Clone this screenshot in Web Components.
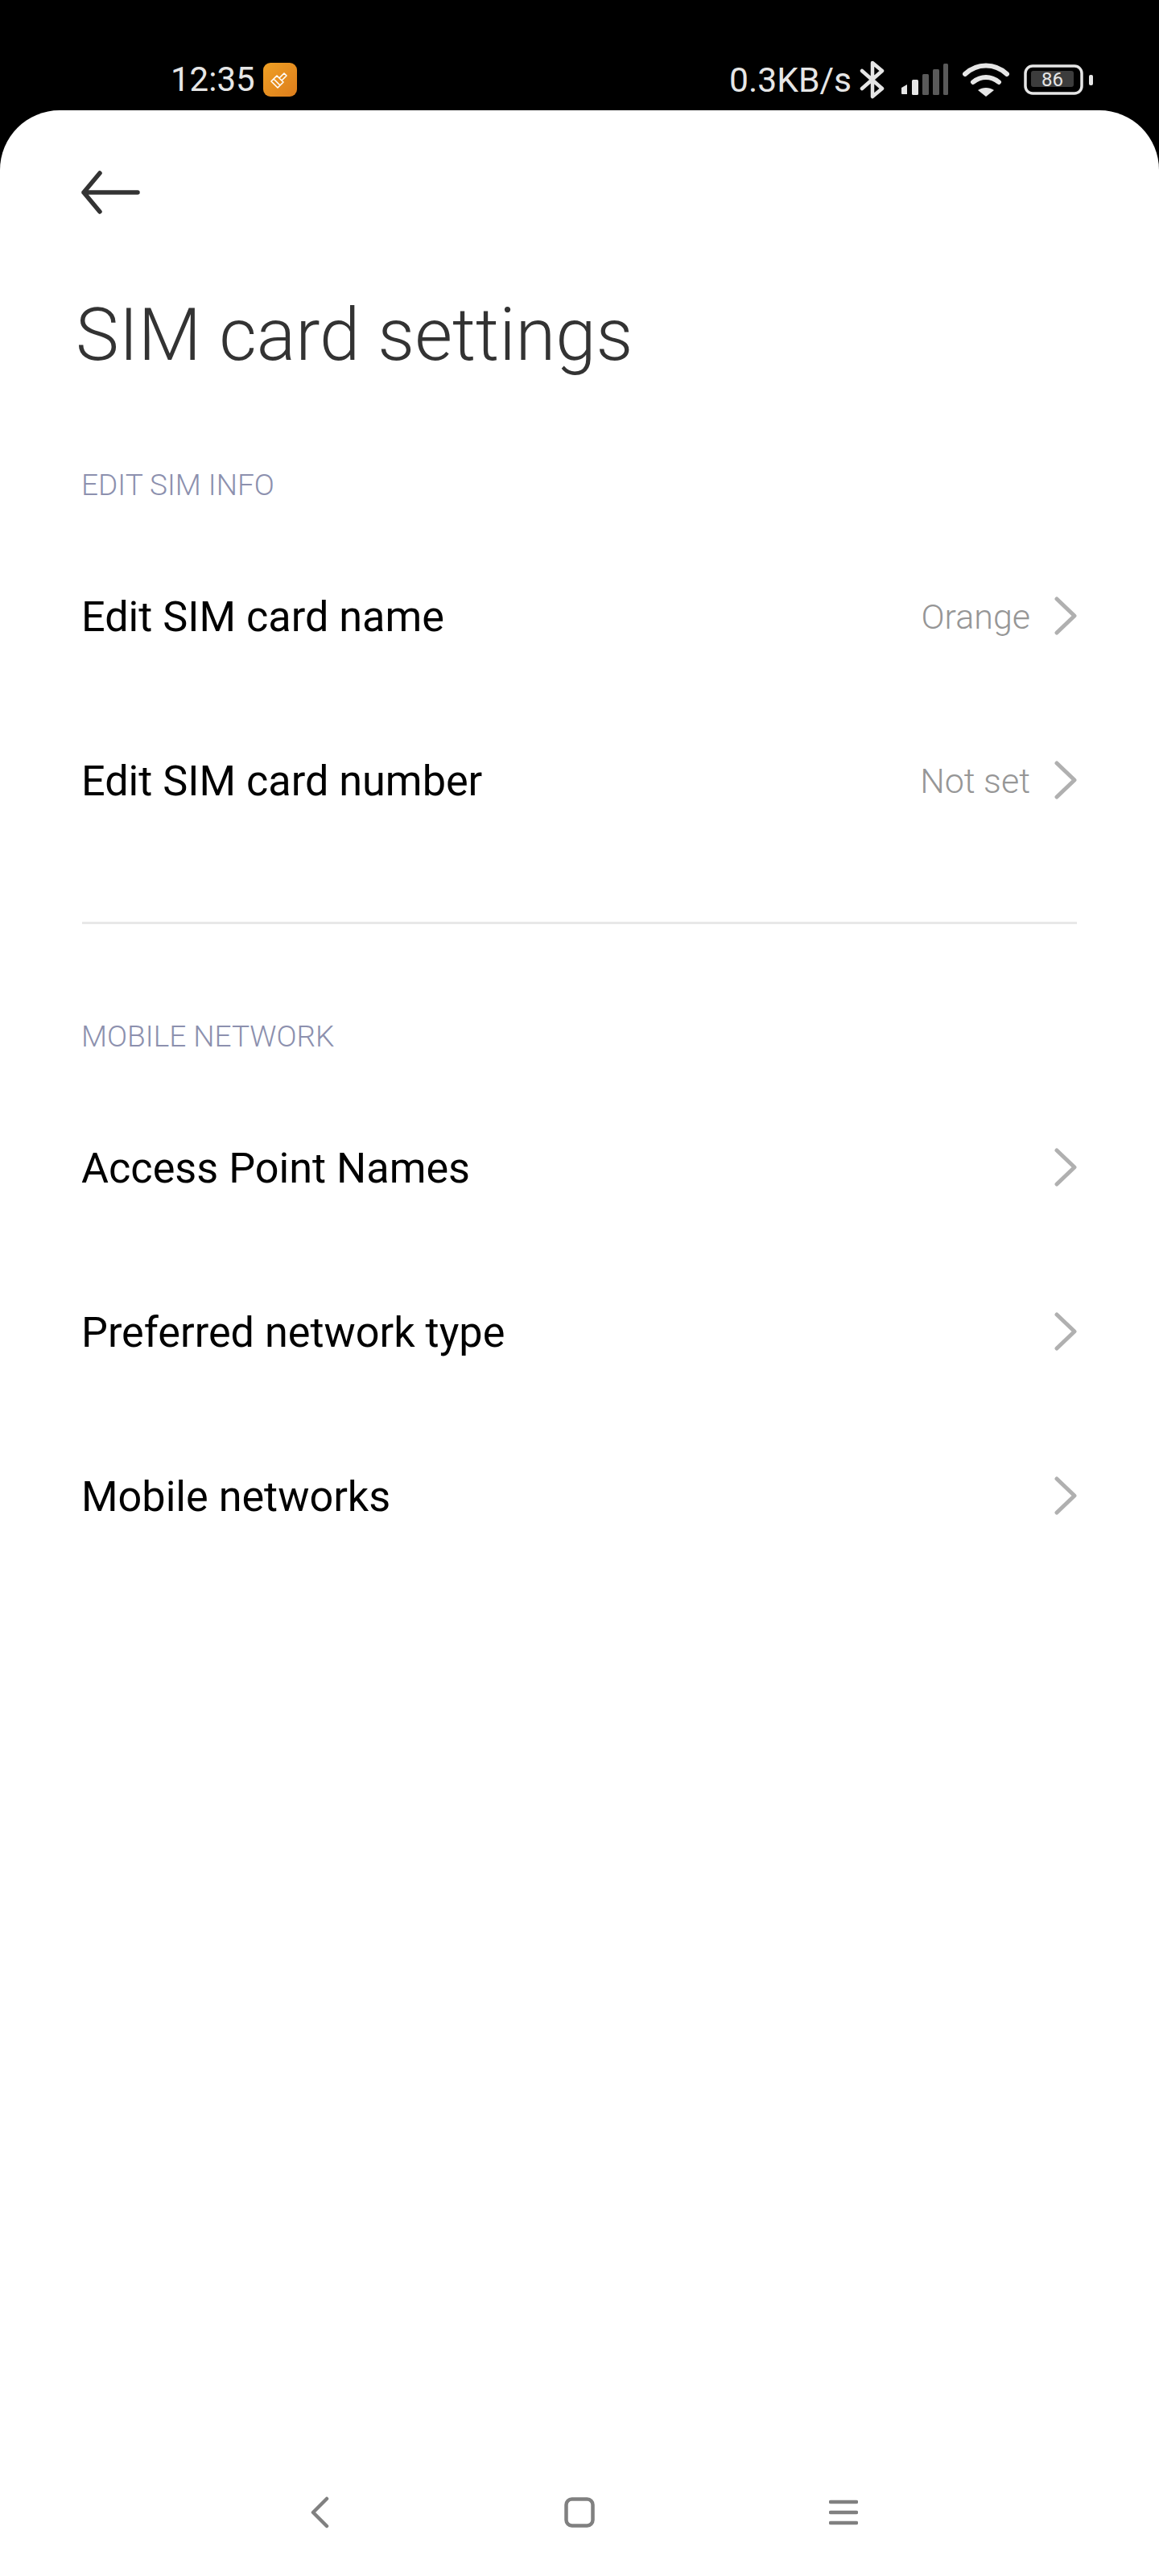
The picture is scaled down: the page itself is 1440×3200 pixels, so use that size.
<!DOCTYPE html>
<html>
<head>
<meta charset="utf-8">
<title>SIM card settings</title>
<style>
    html, body { margin: 0; padding: 0; background: #000; }
    body { font-family: Roboto, "Liberation Sans", sans-serif; }
</style>
</head>
<body>
<sim-screen>
    <status-bar></status-bar>
    <settings-page heading="SIM card settings">
        <section-label>EDIT SIM INFO</section-label>
        <setting-row value="Orange">Edit SIM card name</setting-row>
        <setting-row value="Not set">Edit SIM card number</setting-row>
        <list-divider></list-divider>
        <section-label>MOBILE NETWORK</section-label>
        <setting-row>Access Point Names</setting-row>
        <setting-row>Preferred network type</setting-row>
        <setting-row>Mobile networks</setting-row>
    </settings-page>
    <nav-keys></nav-keys>
</sim-screen>

<script>
class SimScreen extends HTMLElement {
    connectedCallback() {
        this.attachShadow({ mode: 'open' });
        this.shadowRoot.innerHTML = `
            <style>
                :host {
                    display: flex;
                    flex-direction: column;
                    width: 1440px;
                    height: 3200px;
                    background: #000;
                    overflow: hidden;
                }
                .sheet {
                    flex: 1;
                    display: flex;
                    flex-direction: column;
                    background: #fff;
                    border-radius: 74px 74px 0 0;
                }
            </style>
            <slot name="top"></slot>
            <div class="sheet"><slot></slot></div>
        `;
        this.querySelector('status-bar').slot = 'top';
    }
}

class StatusBar extends HTMLElement {
    connectedCallback() {
        this.attachShadow({ mode: 'open' });
        this.shadowRoot.innerHTML = `
            <style>
                :host {
                    display: flex;
                    align-items: center;
                    height: 137px;
                    box-sizing: border-box;
                    padding: 60px 0 0 212px;
                    color: #e6e6e6;
                    font-size: 42px;
                    line-height: 50px;
                }
                .time { margin-right: 10px; }
                .spacer { flex: 1; }
                .speed { font-size: 42.6px; }
                svg { display: block; flex: none; }
                .bt { margin-left: 10px; }
                .signal { margin-left: 18px; }
                .wifi { margin-left: 18px; }
                .battery-box {
                    position: relative;
                    margin: 0 80px 0 18px;
                    width: 88px;
                    height: 38px;
                }
                .battery-box svg { position: absolute; inset: 0; }
                .level {
                    position: absolute;
                    left: 9px;
                    top: 8px;
                    width: 53px;
                    height: 20px;
                    background: #3c3c3c;
                    border-radius: 3px;
                    text-align: center;
                    font-size: 24px;
                    line-height: 22px;
                    color: #e6e6e6;
                }
            </style>
            <span class="time">12:35</span>
            <svg width="42" height="42" viewBox="0 0 42 42">
                <defs>
                    <linearGradient id="g" x1="0" y1="0" x2="1" y2="1">
                        <stop offset="0" stop-color="#f0a024"/>
                        <stop offset="1" stop-color="#dc7d1c"/>
                    </linearGradient>
                </defs>
                <rect width="42" height="42" rx="9" fill="url(#g)"/>
                <path d="M10 23l7-7 8 8-7 7zM13 20l8 8M20 19l6-6 3 3-6 6" fill="none" stroke="#fff" stroke-width="1.600" stroke-linejoin="round"/>
            </svg>
            <span class="spacer"></span>
            <span class="speed">0.3KB/s</span>
            <svg class="bt" width="32" height="48" viewBox="0 0 32 48">
                <path d="M3 13l25 22-12 10V3l12 10L3 35" fill="none" stroke="#e6e6e6" stroke-width="4.500" stroke-linejoin="round" stroke-linecap="round"/>
            </svg>
            <svg class="signal" width="60" height="40" viewBox="0 0 60 40">
                <path d="M2 30l7-4v12H3a1 1 0 0 1-1-1z" fill="#e6e6e6"/>
                <rect x="15" y="20" width="8" height="19" rx="1.500" fill="#e6e6e6"/>
                <rect x="28" y="13" width="8" height="26" rx="1.500" fill="#5a5a5a"/>
                <rect x="41" y="7" width="8" height="32" rx="1.500" fill="#5a5a5a"/>
                <rect x="54" y="0" width="6" height="39" rx="1.500" fill="#5a5a5a"/>
            </svg>
            <svg class="wifi" width="58" height="44" viewBox="0 0 58 44">
                <path d="M3 15C18 1 40 1 55 15" fill="none" stroke="#e6e6e6" stroke-width="6" stroke-linecap="round"/>
                <path d="M13 25c10-8 22-8 32 0" fill="none" stroke="#e6e6e6" stroke-width="6" stroke-linecap="round"/>
                <path d="M29 43l-10-8c6-4 14-4 20 0z" fill="#e6e6e6"/>
            </svg>
            <div class="battery-box">
                <svg width="88" height="38" viewBox="0 0 88 38">
                    <rect x="2" y="2" width="70" height="34" rx="9" fill="none" stroke="#e6e6e6" stroke-width="3.500"/>
                    <rect x="81" y="13" width="5" height="13" rx="2" fill="#e6e6e6"/>
                </svg>
                <div class="level">86</div>
            </div>
        `;
    }
}

class SettingsPage extends HTMLElement {
    connectedCallback() {
        this.attachShadow({ mode: 'open' });
        this.shadowRoot.innerHTML = `
            <style>
                :host { display: block; flex: 1; }
                .back { display: block; margin: 72px 0 0 100px; }
                h1 {
                    margin: 87px 0 0 94px;
                    font-size: 90.5px;
                    line-height: 120px;
                    font-weight: 300;
                    color: #333;
                }
                .list { margin-top: 105px; }
            </style>
            <svg class="back" width="76" height="60" viewBox="0 0 76 60">
                <path d="M4 30H71M24 6L4 30l20 24" fill="none" stroke="#333" stroke-width="5.500" stroke-linecap="round" stroke-linejoin="round"/>
            </svg>
            <h1></h1>
            <div class="list"><slot></slot></div>
        `;
        this.shadowRoot.querySelector('h1').textContent = this.getAttribute('heading');
    }
}

class SectionLabel extends HTMLElement {
    connectedCallback() {
        this.attachShadow({ mode: 'open' });
        this.shadowRoot.innerHTML = `
            <style>
                :host {
                    display: block;
                    padding: 0 102px 39px 101px;
                    font-size: 37px;
                    line-height: 44px;
                    font-weight: 300;
                    color: #8c90ae;
                }
            </style>
            <slot></slot>
        `;
    }
}

class SettingRow extends HTMLElement {
    connectedCallback() {
        this.attachShadow({ mode: 'open' });
        this.shadowRoot.innerHTML = `
            <style>
                :host {
                    display: flex;
                    align-items: center;
                    height: 204px;
                    padding: 0 102px 0 101px;
                    font-size: 52.2px;
                    color: #000;
                }
                .label { flex: 1; }
                .value { font-size: 43px; font-weight: 300; color: #969696; margin-right: 30px; }
                svg { display: block; flex: none; margin-top: -2px; }
            </style>
            <span class="label"><slot></slot></span>
            <span class="value"></span>
            <svg width="28" height="48" viewBox="0 0 28 48">
                <path d="M3 3l22 21L3 45" fill="none" stroke="#b0b0b0" stroke-width="5" stroke-linecap="round" stroke-linejoin="round"/>
            </svg>
        `;
        this.shadowRoot.querySelector('.value').textContent = this.getAttribute('value') || '';
    }
}

class ListDivider extends HTMLElement {
    connectedCallback() {
        this.attachShadow({ mode: 'open' });
        this.shadowRoot.innerHTML = `
            <style>
                :host {
                    display: block;
                    height: 3px;
                    margin: 73px 102px 118px;
                    background: #e8e8e8;
                }
            </style>
        `;
    }
}

class NavKeys extends HTMLElement {
    connectedCallback() {
        this.attachShadow({ mode: 'open' });
        this.shadowRoot.innerHTML = `
            <style>
                :host {
                    display: flex;
                    justify-content: space-between;
                    align-items: center;
                    height: 54px;
                    padding: 0 374px 0 385px;
                    margin-bottom: 52px;
                }
                svg { display: block; }
            </style>
            <svg width="24" height="40" viewBox="0 0 24 40">
                <path d="M21 3L4 20l17 17" fill="none" stroke="#808080" stroke-width="4.500" stroke-linecap="round" stroke-linejoin="round"/>
            </svg>
            <svg width="38" height="38" viewBox="0 0 38 38">
                <rect x="2.500" y="2.500" width="33" height="33" rx="7" fill="none" stroke="#808080" stroke-width="4.500"/>
            </svg>
            <svg width="36" height="34" viewBox="0 0 36 34">
                <path d="M2 4h32M2 17h32M2 30h32" fill="none" stroke="#808080" stroke-width="4.500" stroke-linecap="round"/>
            </svg>
        `;
    }
}

customElements.define('sim-screen', SimScreen);
customElements.define('status-bar', StatusBar);
customElements.define('settings-page', SettingsPage);
customElements.define('section-label', SectionLabel);
customElements.define('setting-row', SettingRow);
customElements.define('list-divider', ListDivider);
customElements.define('nav-keys', NavKeys);
</script>
</body>
</html>
